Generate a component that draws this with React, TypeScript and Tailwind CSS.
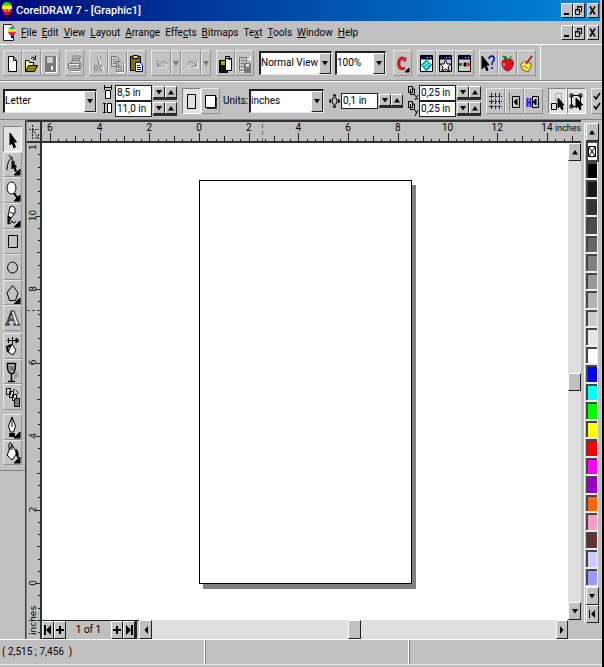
import type { ReactNode } from 'react';
import clsx from 'clsx';

const MENU_ITEMS: [string, number][] = [
  ['File', 0], ['Edit', 0], ['View', 0], ['Layout', 0], ['Arrange', 0], ['Effects', 4],
  ['Bitmaps', 0], ['Text', 2], ['Tools', 0], ['Window', 0], ['Help', 0],
];

const PALETTE = [
  '#000000', '#1a1a1a', '#333333', '#4d4d4d', '#666666', '#808080', '#999999', '#b3b3b3', '#cccccc', '#e6e6e6', '#ffffff',
  '#0000ff', '#00ffff', '#00ff00', '#ffff00', '#ff0000', '#ff00ff', '#9900cc', '#ff6600', '#ff99cc', '#663333', '#ccccff', '#9999ff',
];

const RAISED = 'border border-t-white border-l-white border-r-[#202020] border-b-[#202020] bg-[#c0c0c0]';
const SOFT = 'border border-t-[#e8e8e8] border-l-[#e8e8e8] border-r-[#909090] border-b-[#909090] bg-[#c3c3c3]';
const PRESSED = 'border border-t-[#808080] border-l-[#808080] border-r-white border-b-white bg-[#e2e2e2]';
const FIELD = 'border-t-2 border-l-2 border-r border-b border-t-[#202020] border-l-[#202020] border-r-[#e8e8e8] border-b-[#e8e8e8] bg-white';

function Icon({ children }: { children: ReactNode }) {
  return <svg viewBox="0 0 17 24" className="block h-6 w-[17px]" fill="none" stroke="#000" strokeWidth="1">{children}</svg>;
}

function ToolButton({ label, children, pressed, className = 'w-[19px] h-[26px]' }: { label: string; children: ReactNode; pressed?: boolean; className?: string }) {
  return (
    <button aria-label={label} title={label} className={clsx('flex shrink-0 items-center justify-center overflow-hidden', pressed ? PRESSED : SOFT, className)}>
      {children}
    </button>
  );
}

function Arrow({ dir }: { dir: 'up' | 'down' | 'left' | 'right' }) {
  const d = { up: 'M1 6.500h6L4 2z', down: 'M1 2h6L4 6.500z', left: 'M6 0v8L2.500 4z', right: 'M2 0v8l3.500-4z' }[dir];
  return <svg viewBox="0 0 8 8" className="block size-2 shrink-0"><path d={d} /></svg>;
}

function ArrowButton({ dir, label, className }: { dir: 'up' | 'down' | 'left' | 'right'; label: string; className: string }) {
  return (
    <button aria-label={label} className={clsx('flex shrink-0 items-center justify-center', RAISED, className)}>
      <Arrow dir={dir} />
    </button>
  );
}

function Combo({ label, value, className }: { label: string; value: string; className: string }) {
  return (
    <div className={clsx('relative h-6 shrink-0', FIELD, className)}>
      <select aria-label={label} id={label} className="block h-full w-full appearance-none bg-transparent pr-3 outline-none">
        <option>{value}</option>
      </select>
      <span className={clsx('pointer-events-none absolute inset-y-0 right-0 flex w-3 items-center justify-center', RAISED)}>
        <Arrow dir="down" />
      </span>
    </div>
  );
}

function Measure({ label, value }: { label: string; value: string }) {
  return (
    <div className="flex items-center gap-px">
      <input aria-label={label} defaultValue={value} className="h-4 w-[37px] border border-[#202020] bg-white pl-px outline-none" />
      <div className="flex w-6 border-b-2 border-[#303030]">
        <ArrowButton dir="down" label={`${label} down`} className="h-3 w-3" />
        <ArrowButton dir="up" label={`${label} up`} className="h-3 w-3" />
      </div>
    </div>
  );
}

function Balloon() {
  return (
    <svg viewBox="0 0 12 17" className="h-[17px] w-3 shrink-0">
      <path d="M4 0h4l2 2H2z" fill="#0c4" />
      <path d="M2 2h8l1 2H1z" fill="#6d0" />
      <path d="M1 4h10v3H1z" fill="#fe0" />
      <path d="M1 7h10l-1 3H2z" fill="#f32" />
      <path d="M2 10h8l-2 3H4z" fill="#c0182c" />
      <path d="M4 4h1v5H4zM7 4h1v5H7z" fill="#fff" opacity=".5" />
      <path d="M4 13h4v3H4z" fill="#401010" />
    </svg>
  );
}

function DocIcon() {
  return (
    <svg viewBox="0 0 13 18" className="h-[18px] w-[13px] shrink-0">
      <path d="M.5.5h8l2 3v13H.5z" fill="#fff" stroke="#222" />
      <path d="M7 3h4l1 2H6z" fill="#0b6" />
      <path d="M5 5h8v3H5z" fill="#fd0" />
      <path d="M5 8h8l-1 2H6z" fill="#f22" />
      <path d="M6 10h6l-2 2H8z" fill="#928" />
      <path d="M8 12h2v2H8z" />
    </svg>
  );
}

function WindowButtons() {
  const cls = clsx('flex h-[15px] w-3 items-center justify-center', RAISED);
  return (
    <div className="ml-auto flex">
      <button aria-label="Minimize" className={cls}>
        <svg viewBox="0 0 10 13" className="h-[13px] w-2.5 shrink-0"><path d="M2 9h5v2H2z" /></svg>
      </button>
      <button aria-label="Restore" className={cls}>
        <svg viewBox="0 0 10 13" className="h-[13px] w-2.5 shrink-0" fill="none" stroke="#000"><path d="M3.500 5V2.500h4v5H6M3 3h5M1.500 5.500h4v5h-4zM1 6h5" /></svg>
      </button>
      <button aria-label="Close" className={clsx('ml-0.5', cls)}>
        <svg viewBox="0 0 10 13" className="h-[13px] w-2.5 shrink-0" stroke="#000" strokeWidth="1.500"><path d="M2 2.500l5 8M7 2.500l-5 8" /></svg>
      </button>
    </div>
  );
}

function StandardBar() {
  return (
    <div className="flex h-9 shrink-0 items-center border-b border-[#808080] pl-[3px]">
      <div className="flex">
        <ToolButton label="New"><Icon><path d="M4.500 5.500h5l3 4v11h-8z" fill="#fff" /><path d="M9.500 5.500v4h3" /></Icon></ToolButton>
        <ToolButton label="Open">
          <Icon>
            <path d="M2.500 20V9.500h3l1 2h4V14" fill="#ff8" />
            <path d="M2.500 20.500l3-6h9l-3 6z" fill="#880" />
            <path d="M8 7.500q2-3 4 0M12.500 4.500v4H10" />
          </Icon>
        </ToolButton>
        <ToolButton label="Save"><Icon><path d="M3.500 5.500h10v15h-10z" fill="#777" stroke="#777" /><path d="M5 6h6v6H5z" fill="#ccc" stroke="none" /><path d="M9 15h2v4H9z" fill="#eee" stroke="none" /><path d="M14.500 6v15.500H4" stroke="#fff" /></Icon></ToolButton>
      </div>
      <ToolButton label="Print" className="ml-[5px] h-[26px] w-[19px]">
        <Icon>
          <path d="M5.500 12l2-7h7l-2 7M8 7.500h5M7 9.500h5" stroke="#777" />
          <path d="M2.500 12.500h11v5h-11zM4 19.500h9l2-3v-5M4 15h8" stroke="#777" />
          <path d="M3.500 13.500h9M5 20.500h9" stroke="#fff" />
        </Icon>
      </ToolButton>
      <div className="ml-[5px] flex">
        <ToolButton label="Cut"><Icon><path d="M7.500 5l2 9M10.500 5l-2 9" stroke="#777" /><ellipse cx="6" cy="17" rx="1.500" ry="3" stroke="#777" /><ellipse cx="11" cy="17" rx="1.500" ry="3" stroke="#777" /><path d="M8.500 5l2 9M13 15v5" stroke="#fff" /></Icon></ToolButton>
        <ToolButton label="Copy"><Icon><path d="M2.500 5.500h5l2 2v8h-7zM7.500 10.500h4l3 3v7h-7z" fill="#ccc" stroke="#777" /><path d="M4 8.500h3M4 10.500h3M4 12.500h3M9 14.500h3M9 16.500h4M9 18.500h4" stroke="#777" /><path d="M15.500 13v8.500H8" stroke="#fff" /></Icon></ToolButton>
        <ToolButton label="Paste">
          <Icon>
            <path d="M2.500 5.500h10v14h-10z" fill="#770" />
            <path d="M5 4.500h5v3H5z" fill="#fd5" />
            <path d="M7.500 11.500h5l2 3v6h-7z" fill="#fff" stroke="#008" />
            <path d="M9 14.500h3M9 16.500h4M9 18.500h4" stroke="#008" />
          </Icon>
        </ToolButton>
      </div>
      <div className="ml-[5px] flex">
        <ToolButton label="Undo" className="h-[26px] w-5"><Icon><path d="M4.500 9v6.500H9M5 15q3-6 7-4 3 3-1 7" stroke="#888" /><path d="M5.500 16.500H10M13.500 13q0 3-2 5" stroke="#fff" /></Icon></ToolButton>
        <ToolButton label="Undo list" className="h-[26px] w-2.5"><svg viewBox="0 0 8 8" className="size-2 shrink-0"><path d="M1 2h6L4 7z" fill="#777" /></svg></ToolButton>
        <ToolButton label="Redo" className="h-[26px] w-5"><Icon><path d="M13.500 9v6.500H9M13 15q-3-6-7-4-3 3 1 7" stroke="#888" /><path d="M14.500 10v6.500H10M5 14q0 3 2 5" stroke="#fff" /></Icon></ToolButton>
        <ToolButton label="Redo list" className="h-[26px] w-2.5"><svg viewBox="0 0 8 8" className="size-2 shrink-0"><path d="M1 2h6L4 7z" fill="#777" /></svg></ToolButton>
      </div>
      <div className="ml-[5px] flex">
        <ToolButton label="Import">
          <Icon>
            <path d="M2.500 9.500h8v12h-8z" fill="#111" />
            <path d="M4 10h4v4H4z" fill="#aa2" stroke="none" />
            <path d="M8.500 7.500h6v12h-6z" fill="#fff" />
            <path d="M8.500 11V5.500h4v3M10.500 7l2 2 2-2" />
          </Icon>
        </ToolButton>
        <ToolButton label="Export"><Icon><path d="M3.500 6.500h7v13h-7zM5 9.500h4M5 12.500h3M5 15.500h3" stroke="#777" /><path d="M8.500 12.500h6v9h-6z" fill="#777" stroke="#777" /><path d="M10 13h3v3h-3z" fill="#ddd" stroke="none" /><path d="M11 8.500h3.500V5M4.500 20.500H8" stroke="#fff" /></Icon></ToolButton>
      </div>
      <Combo label="View quality" value="Normal View" className="ml-[5px] w-[73px]" />
      <Combo label="Zoom level" value="100%" className="ml-[3px] w-[51px]" />
      <ToolButton label="Corel applications" className="ml-[7px] h-[26px] w-[19px]"><Icon><path d="M11 9q-2-3-5-1-2 3-1 7 2 4 6 2" stroke="#e01020" strokeWidth="3" /><path d="M12 6v4H9" stroke="#e01020" /><path d="M15 17v4h-4z" fill="#000" /></Icon></ToolButton>
      <div className="ml-[5px] flex">
        <ToolButton label="Scrapbook"><Icon><path d="M2.500 4.500h12v16h-12z" fill="#fff" /><path d="M3 5h11v3H3z" fill="#006" /><path d="M9 6.500h1M12 6.500h1" stroke="#fff" /><path d="M8.500 9l5 5-5 6-5-6z" fill="#0cc" stroke="#066" /><path d="M5 15l5-4M7 17l5-4" stroke="#aff" /></Icon></ToolButton>
        <ToolButton label="Symbols"><Icon><path d="M2.500 4.500h12v16h-12z" fill="#ccc" /><path d="M3 5h11v3H3z" fill="#006" /><path d="M9 6.500h1M12 6.500h1" stroke="#fff" /><path d="M8.500 9l1.500 4h4l-3 3 1 4-3.500-2L5 20l1-4-3-3h4z" fill="#fff" /></Icon></ToolButton>
        <ToolButton label="Script"><Icon><path d="M2.500 4.500h12v16h-12z" fill="#ccc" /><path d="M3 5h11v3H3z" fill="#006" /><path d="M9 6.500h1M12 6.500h1" stroke="#fff" /><path d="M3.500 12.500h2v2h-2z" fill="#080" stroke="#080" /><path d="M8 12h2v3H8z" fill="#000" /><path d="M12 11.500v4l2-2z" fill="#e01020" stroke="#e01020" /></Icon></ToolButton>
      </div>
      <div className="ml-[5px] flex">
        <ToolButton label="What's this">
          <Icon>
            <path d="M2 5v13l2.500-3 2.500 5 1-1-2-5h3z" fill="#000" />
            <path d="M9 8q0-3 3-3 3 1 2 4-2 2-2 5M12 16v2" stroke="#00a" strokeWidth="1.500" />
          </Icon>
        </ToolButton>
        <ToolButton label="Corel web site"><Icon><path d="M8.500 9Q4 7 3 12q1 7 5.500 8 5-1 6-8-1-5-6-3z" fill="#e01020" stroke="#901020" /><path d="M9 9q-1-4-5-4 1 4 5 4zM9 9q3-1 3-4" fill="#080" stroke="#080" /><path d="M5 12v3" stroke="#fff" /></Icon></ToolButton>
        <ToolButton label="CorelTUTOR"><Icon><path d="M2.500 13l5-3 6 3-3 8-6-2z" fill="#ee4" stroke="#663" /><path d="M8 13l6-8" stroke="#a22" strokeWidth="2" /><path d="M5 15l5 2" stroke="#884" /></Icon></ToolButton>
      </div>
      <div className="ml-1 h-full border-l border-white" />
    </div>
  );
}

function PropertyBar() {
  return (
    <div className="flex h-[38px] shrink-0 items-center overflow-hidden border-t border-white pl-[3px]">
      <Combo label="Paper" value="Letter" className="w-[94px]" />
      <svg viewBox="0 0 10 32" className="ml-1.5 h-8 w-2.5 shrink-0" fill="none" stroke="#000">
        <path d="M1 2.500h8M1.500 0v5M8.500 0v5" />
        <path d="M2.500 5.500h5v8h-5z" fill="#fff" />
        <path d="M1.500 18v10M0 18.500h3M0 27.500h3" />
        <path d="M4.500 18.500h4v9h-4z" fill="#fff" />
      </svg>
      <div className="ml-0.5 flex flex-col"><Measure label="Paper width" value="8,5 in" /><Measure label="Paper height" value="11,0 in" /></div>
      <div className="ml-[5px] flex">
        <ToolButton label="Portrait" pressed className="h-[26px] w-[19px]"><Icon><path d="M4.500 5.500h8v14h-8z" /></Icon></ToolButton>
        <ToolButton label="Landscape"><Icon><path d="M3.500 6.500h10v12h-10z" fill="#fff" /><path d="M14.500 8v11.500H5" stroke="#333" /></Icon></ToolButton>
      </div>
      <label htmlFor="Units" className="ml-[3px] w-[26px] shrink-0">Units:</label>
      <Combo label="Units" value="inches" className="w-[75px]" />
      <svg viewBox="0 0 11 16" className="ml-[5px] h-4 w-[11px] shrink-0" fill="none" stroke="#000">
        <ellipse cx="5.500" cy="8" rx="2.500" ry="3.500" /><path d="M4 3h3L5.500 1zM4 13h3l-1.500 2zM1.500 6v4L.5 8zM9.500 6v4l1-2z" fill="#000" />
      </svg>
      <div className="ml-px"><Measure label="Nudge offset" value="0,1 in" /></div>
      <svg viewBox="0 0 12 32" className="ml-1 h-8 w-3 shrink-0" fill="none" stroke="#000">
        <path d="M1.500 1.500h4v6h-4zM3.500 4v5.500h4V4H6M8 10l3 5M11 10l-3 5" />
        <path d="M1.500 16.500h4v6h-4zM3.500 19v5.500h4V19H6M8 25l1.500 3 1.500-3M9.500 28L8 31" />
      </svg>
      <div className="flex flex-col"><Measure label="Duplicate distance x" value="0,25 in" /><Measure label="Duplicate distance y" value="0,25 in" /></div>
      <div className="ml-[5px] flex">
        <ToolButton label="Snap to grid"><Icon><path d="M4.500 4v16M8.500 4v16M12.500 4v16M2 7.500h13M2 12.500h13M2 17.500h13" stroke="#113" strokeDasharray="2 1" /><path d="M4 7.500h1M8 7.500h1M12 7.500h1M4 12.500h1M8 12.500h1M12 12.500h1M4 17.500h1M8 17.500h1M12 17.500h1" stroke="#22d" strokeWidth="3" /></Icon></ToolButton>
        <ToolButton label="Snap to guidelines"><Icon><path d="M3.500 4v17" stroke="#09c" strokeDasharray="3 1" /><path d="M6.500 7.500h7v11h-7z" /><path d="M8 13l3-3v6z" fill="#000" /></Icon></ToolButton>
        <ToolButton label="Snap to objects"><Icon><path d="M2.500 9v9M5.500 9v9M3 13.500h3" stroke="#22d" strokeWidth="2" /><path d="M7.500 7.500h6v11h-6z" /><path d="M8 13l3-3v6z" fill="#000" /></Icon></ToolButton>
      </div>
      <div className="ml-[5px] flex">
        <ToolButton label="Treat as filled" pressed><Icon><path d="M6.500 4.500h6v7h-6z" stroke="#777" strokeDasharray="1 1" /><path d="M2.500 14.500h5v6h-5z" /><path d="M9 9v10l2-2 2 4 1-1-1-4h2z" fill="#000" /></Icon></ToolButton>
        <ToolButton label="Draw complex objects" pressed><Icon><path d="M3.500 6.500h9v11h-9zM2 5h3v3H2zM11 5h3v3h-3zM2 16h3v3H2z" /><path d="M8 9v10l2-2 2 4 1-1-1-4h3z" fill="#000" /></Icon></ToolButton>
      </div>
      <ToolButton label="Options" className="ml-[5px] h-[26px] w-[19px]"><Icon><path d="M2 7l2 3 4-6M2 17l2 3 4-6" strokeWidth="1.500" /></Icon></ToolButton>
    </div>
  );
}

const FLYOUT = <path d="M16 17v6h-6z" fill="#000" />;

function Toolbox() {
  const btn = 'w-[19px] flex-1';
  return (
    <div className="flex w-[26px] shrink-0 flex-col border-r border-[#404040] pl-[3px] pt-1.5">
      <div className="flex h-[205px] flex-col">
        <ToolButton label="Pick tool" pressed className={btn}><Icon><path d="M6 6v12l2-2 2 5 1.500-1-2-5h3z" fill="#000" /></Icon></ToolButton>
        <ToolButton label="Shape tool" className={btn}><Icon><path d="M3 18Q3 8 9 5M5 3l6 8" /><path d="M8 9v8l1.500-2 2 5 1-1-2-4h2z" fill="#000" />{FLYOUT}</Icon></ToolButton>
        <ToolButton label="Zoom tool" className={btn}><Icon><ellipse cx="7.500" cy="10" rx="4.500" ry="6" fill="#fff" /><path d="M10 15l4 6" strokeWidth="2" />{FLYOUT}</Icon></ToolButton>
        <ToolButton label="Freehand tool" className={btn}><Icon><path d="M6 3q3-2 5 1v5l-4 5-3-2z" fill="#fff" /><path d="M4 12l3 2-3 6z" fill="#000" /><path d="M4 20q3 0 4-3 2 4 4 0M6 8l4 2" />{FLYOUT}</Icon></ToolButton>
        <ToolButton label="Rectangle tool" className={btn}><Icon><path d="M4.500 6.500h9v12h-9z" /></Icon></ToolButton>
        <ToolButton label="Ellipse tool" className={btn}><Icon><ellipse cx="8.500" cy="12.500" rx="5" ry="5.500" /></Icon></ToolButton>
        <ToolButton label="Polygon tool" className={btn}><Icon><path d="M8.500 4.500l5.500 7-2.500 8h-6l-2.500-8z" />{FLYOUT}</Icon></ToolButton>
        <ToolButton label="Text tool" className={btn}><span className="font-[Liberation_Serif] text-xl leading-none font-bold text-white [-webkit-text-stroke:1px_#333]">A</span></ToolButton>
      </div>
      <div className="mt-0.5 flex h-[77px] flex-col">
        <ToolButton label="Interactive fill" className={btn}><Icon><path d="M3 6.500h11M4.500 4v5M8.500 3v7" /><path d="M12 4l3 2.500-3 2.500z" fill="#000" /><path d="M8 10l4 6-3 5-5-3z" fill="#fff" /><path d="M4 18l-1-5 4-2" strokeWidth="2" /></Icon></ToolButton>
        <ToolButton label="Interactive transparency" className={btn}><Icon><path d="M10 13l4-1 1 3-5 5z" fill="#999" stroke="none" /><path d="M3.500 3.500h8q0 9-3 10H7Q3 13 3.500 3.500zM7.500 14v7M4 21.500h7" strokeWidth="1.500" /><path d="M5 6h5v5H6z" fill="#777" stroke="none" /></Icon></ToolButton>
        <ToolButton label="Interactive blend" className={btn}><Icon><path d="M2.500 3.500h4v6h-4zM5.500 6.500h4v6h-4zM8.500 9.500h4v6h-4z" fill="#ddd" /><path d="M10.500 13.500h5v8h-5z" fill="#777" /><path d="M9 5q4-1 5 4" strokeDasharray="2 1" /></Icon></ToolButton>
      </div>
      <div className="mt-1 flex h-[51px] flex-col">
        <ToolButton label="Outline tool" className={btn}><Icon><path d="M8 2l-3.500 9 2 6h3l2-6z" fill="#fff" /><path d="M8 2v10" /><path d="M5.500 18.500h5v3h-5z" fill="#000" />{FLYOUT}</Icon></ToolButton>
        <ToolButton label="Fill tool" className={btn}><Icon><path d="M8 5l5 8-5 7-5-5z" fill="#fff" /><path d="M5 10V4q2-3 3 1v5" /><path d="M12 9q3 3 2 9l-2-4z" fill="#000" />{FLYOUT}</Icon></ToolButton>
      </div>
      <div className="mt-[5px] -ml-[3px] border-t border-[#808080] shadow-[inset_0_1px_0_#fff]" />
    </div>
  );
}

// 49.7px for two inches across, six ticks between labels
function TopRuler() {
  const ticks = Array.from({ length: 64 }, (_, i) => i - 18);
  return (
    <div className="h-[21px] min-w-0 flex-1 overflow-hidden border-b-2 border-[#303030]">
      <svg className="block h-full w-full" fontSize="10" fontFamily="Roboto, Liberation Sans, sans-serif">
        {ticks.map(t => {
          const x = Math.round(157 + t * 8.29);
          const h = t % 6 === 0 ? 8 : t % 3 === 0 ? 5 : 2;
          return <path key={t} d={`M${x + 0.5} ${19 - h}v${h}`} stroke="#222" />;
        })}
        {[-6, -4, -2, 0, 2, 4, 6, 8, 10, 12, 14].map(n => (
          <text key={n} x={157 + n * 24.85} y="9" textAnchor="middle">{Math.abs(n)}</text>
        ))}
        <path d="M220.500 2v17" stroke="#666" strokeDasharray="4 3" />
        <text x="513" y="9" fontSize="9">inches</text>
      </svg>
    </div>
  );
}

function SideRuler() {
  const ticks = Array.from({ length: 45 }, (_, i) => i - 5);
  return (
    <div className="w-[15px] shrink-0 overflow-hidden border-r-2 border-[#303030]">
      <svg className="block h-full w-full" fontSize="9" fontFamily="DejaVu Sans, sans-serif">
        {ticks.map(t => {
          const y = Math.round(440 - t * 12.25);
          const w = t % 6 === 0 ? 4 : t % 3 === 0 ? 3 : 2;
          return <path key={t} d={`M${13 - w} ${y + 0.5}h${w}`} stroke="#222" />;
        })}
        {[0, 2, 4, 6, 8, 10].map(n => (
          <text key={n} transform={`translate(9 ${440 - n * 36.75}) rotate(-90)`} textAnchor="middle">{n}</text>
        ))}
        <text transform="translate(9 7) rotate(-90)">1</text>
        <path d="M0 167.500h13" stroke="#444" strokeDasharray="3 2" />
        <text transform="translate(9 492) rotate(-90)">inches</text>
      </svg>
    </div>
  );
}

function Palette() {
  return (
    <div className="flex w-[21px] shrink-0 flex-col pt-[3px] pb-4 pl-[3px]">
      <div className="flex flex-1 flex-col items-center border-l border-white pr-[3px]">
        <ArrowButton dir="up" label="Scroll palette up" className="h-[18px] w-[13px]" />
        <button aria-label="No colour" className="flex min-h-0 w-[13px] flex-1 items-center justify-center border-2 border-[#444] bg-white">
          <svg viewBox="0 0 8 13" className="h-[13px] w-2" stroke="#000" fill="none"><path d="M.5 1.500h7v10h-7zM1 2l6 9M7 2l-6 9" /></svg>
        </button>
        {PALETTE.map(c => (
          <button key={c} aria-label={c} className="flex min-h-0 w-3 flex-1 border-b-2 border-r border-[#eeeeee]">
            <span className="block h-full w-full border-t-2 border-l-2 border-[#444]" style={{ backgroundColor: c }} />
          </button>
        ))}
        <ArrowButton dir="down" label="Scroll palette down" className="h-[18px] w-[13px]" />
        <button aria-label="Palette start" className={clsx('flex h-[18px] w-[13px] items-center justify-center', RAISED)}>
          <svg viewBox="0 0 8 8" className="size-2"><path d="M1 0h1v8H1zM7 0v8L3 4z" /></svg>
        </button>
      </div>
    </div>
  );
}

function PageNav() {
  const cls = clsx('flex w-3 shrink-0 items-center justify-center', RAISED);
  const plus = <svg viewBox="0 0 8 8" className="size-2 shrink-0"><path d="M3 0h2v8H3zM0 3h8v2H0z" /></svg>;
  return (
    <div className="flex shrink-0 border-t border-[#202020]">
      <button aria-label="First page" className={cls}><svg viewBox="0 0 8 10" className="h-2.5 w-2 shrink-0"><path d="M0 0h2v10H0zM7 0v10L2 5z" /></svg></button>
      <button aria-label="Add page before" className={cls}>{plus}</button>
      <span className="flex w-[45px] items-center justify-center">1 of 1</span>
      <button aria-label="Add page after" className={cls}>{plus}</button>
      <button aria-label="Last page" className={cls}><svg viewBox="0 0 8 10" className="h-2.5 w-2 shrink-0"><path d="M6 0h2v10H6zM1 0v10l5-5z" /></svg></button>
      <span className="w-1 border-l-2 border-[#202020] bg-[#c0c0c0]" />
    </div>
  );
}

export default function App() {
  return (
    <div className="flex min-h-screen flex-col border-r-2 border-black bg-[#c0c0c0] font-[Roboto,'Liberation_Sans',sans-serif] text-[10px] leading-3 text-black">
      <header className="mr-0.5 flex h-[21px] shrink-0 items-center bg-linear-to-r from-[#00007b] to-[#1088d8] pl-px pr-px text-white">
        <Balloon />
        <h1 className="ml-[3px] text-[11px] leading-4 font-medium">CorelDRAW 7 - [Graphic1]</h1>
        <WindowButtons />
      </header>
      <nav className="mr-0.5 flex h-[23px] shrink-0 items-center pl-[3px] pr-px">
        <DocIcon />
        <div className="ml-[5px] flex gap-[5px]">
          {MENU_ITEMS.map(([name, u]) => (
            <button key={name}>{name.slice(0, u)}<u>{name[u]}</u>{name.slice(u + 1)}</button>
          ))}
        </div>
        <WindowButtons />
      </nav>
      <div className="h-px shrink-0 bg-white" />
      <StandardBar />
      <PropertyBar />
      <main className="flex flex-1 border-t border-[#808080]">
        <Toolbox />
        <div className="flex min-w-0 flex-1 flex-col border-l border-[#808080]">
          <div className="flex flex-1">
            <div className="flex min-w-0 flex-1 flex-col">
              <div className="flex border-t-2 border-[#303030]">
                <div className="flex h-[21px] w-[15px] shrink-0 items-center justify-center border-r-2 border-b-2 border-[#303030]">
                  <svg viewBox="0 0 12 16" className="h-4 w-3 shrink-0" stroke="#222" fill="none" strokeDasharray="2 1"><path d="M4.500 1v14M1 5.500h10M5 6l5 8M7 14h4M10.500 10v5" /></svg>
                </div>
                <TopRuler />
              </div>
              <div className="flex flex-1">
                <SideRuler />
                <div className="flex min-w-0 flex-1 flex-col">
                  <div className="flex flex-1 bg-white">
                    <div className="min-w-0 flex-1 pt-[37px] pl-[157px]">
                      <div className="h-[404px] w-[213px] border border-black bg-white shadow-[4px_5px_0_#808080]" />
                    </div>
                    <div className="flex w-[13px] shrink-0 flex-col bg-[#dedede]">
                      <ArrowButton dir="up" label="Scroll up" className="h-[18px] w-[13px]" />
                      <div className="flex flex-1 flex-col justify-center"><div className={clsx('h-[18px]', RAISED)} /></div>
                      <ArrowButton dir="down" label="Scroll down" className="h-[18px] w-[13px]" />
                    </div>
                  </div>
                  <div className="flex h-[19px] shrink-0">
                    <PageNav />
                    <div className="flex flex-1 bg-[#dedede]">
                      <ArrowButton dir="left" label="Scroll left" className="w-[13px]" />
                      <div className="flex flex-1 justify-center"><div className={clsx('w-[13px]', RAISED)} /></div>
                      <ArrowButton dir="right" label="Scroll right" className="w-3" />
                    </div>
                    <div className="w-[13px] shrink-0" />
                  </div>
                </div>
              </div>
            </div>
            <Palette />
          </div>
        </div>
      </main>
      <footer className="shrink-0 border-t border-white pb-0.5">
        <div className="flex h-[25px] border-b border-[#e8e8e8]">
          <div className="flex w-[34%] items-center border-r border-white pl-0.5">( 2,515 ; 7,456&nbsp; )</div>
          <div className="w-[34%] border-r border-l border-r-white border-l-[#808080]" />
          <div className="flex-1 border-l border-[#808080]" />
        </div>
      </footer>
    </div>
  );
}
